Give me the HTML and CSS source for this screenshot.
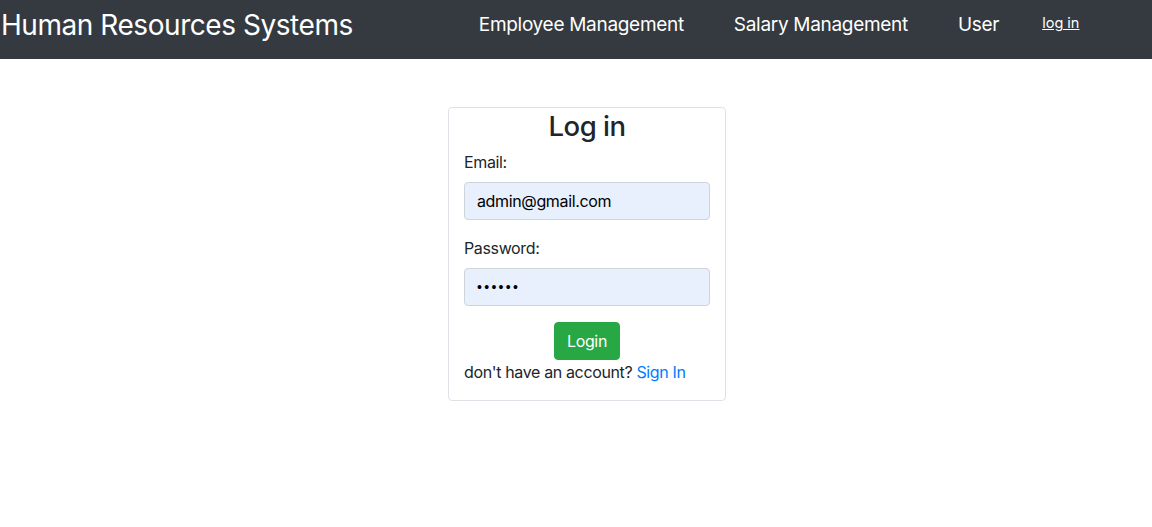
FILE: index.html
```html
<!DOCTYPE html>
<html lang="en">
<head>
<meta charset="utf-8">
<title>Human Resources Systems</title>
<link rel="stylesheet" href="styles.css">
</head>
<body>
<header class="navbar">
  <a class="brand" href="#">Human Resources Systems</a>
  <nav class="nav">
    <a class="nav-link" href="#">Employee Management</a>
    <a class="nav-link" href="#">Salary Management</a>
    <a class="nav-link" href="#">User</a>
    <a class="login-link" href="#">log in</a>
  </nav>
</header>
<main class="main">
  <form class="card">
    <h3 class="title">Log in</h3>
    <div class="form-group">
      <label class="label" for="email">Email:</label>
      <input class="input" id="email" type="email" value="admin@gmail.com">
    </div>
    <div class="form-group">
      <label class="label" for="password">Password:</label>
      <input class="input input-password" id="password" type="password" value="123456">
    </div>
    <div class="actions">
      <button class="btn" type="button">Login</button>
    </div>
    <p class="footer">don't have an account? <a class="signin" href="#">Sign In</a></p>
  </form>
</main>
</body>
</html>
```

FILE: styles.css
```css
* { box-sizing: border-box; }
html, body {
  margin: 0;
  padding: 0;
  background: #fff;
  font-family: Inter, "Noto Sans", sans-serif;
  font-size: 16px;
  line-height: 1.5;
  letter-spacing: -0.36px;
  color: #212529;
}
.navbar {
  height: 59px;
  background: #343a40;
  display: flex;
  align-items: center;
  padding: 0 0 0 1px;
}
.brand {
  color: #fff;
  text-decoration: none;
  font-size: 28px;
  letter-spacing: -0.45px;
  line-height: 1;
  margin-top: -10px;
}
.nav {
  display: flex;
  align-items: center;
  margin-left: 101px;
}
.nav-link {
  color: #fff;
  text-decoration: none;
  font-size: 19px;
  letter-spacing: -0.3px;
  line-height: 1;
  padding: 0 25px;
  margin-top: -10px;
}
.login-link {
  color: #fff;
  font-size: 14.5px;
  letter-spacing: 0;
  line-height: 1;
  margin-left: 18px;
  margin-top: -13px;
}
.main {
  padding: 48px 0 0 448px;
}
.card {
  width: 278px;
  border: 1px solid #dee2e6;
  border-radius: 4px;
  padding: 2px 15px 16px;
  margin: 0;
}
.title {
  margin: 0 0 7px;
  font-size: 27.5px;
  font-weight: 500;
  letter-spacing: -0.5px;
  line-height: 1.2;
  text-align: center;
}
.form-group { margin-bottom: 16px; }
.label {
  display: block;
  margin-bottom: 8px;
}
.input {
  display: block;
  width: 100%;
  height: 38px;
  padding: 6px 12px;
  font-family: inherit;
  font-size: 16px;
  letter-spacing: -0.36px;
  color: #000;
  background: #e8f0fe;
  border: 1px solid #ced4da;
  border-radius: 4px;
}
.input-password {
  font-family: "Liberation Sans", sans-serif;
  font-size: 14px;
  letter-spacing: 2.3px;
}
.actions {
  display: flex;
  justify-content: center;
}
.btn {
  height: 38px;
  padding: 6px 12px;
  font-family: inherit;
  font-size: 16px;
  letter-spacing: -0.36px;
  color: #fff;
  background: #28a745;
  border: 1px solid #28a745;
  border-radius: 4px;
}
.footer { margin: 0; }
.signin {
  color: #007bff;
  text-decoration: none;
}
```
